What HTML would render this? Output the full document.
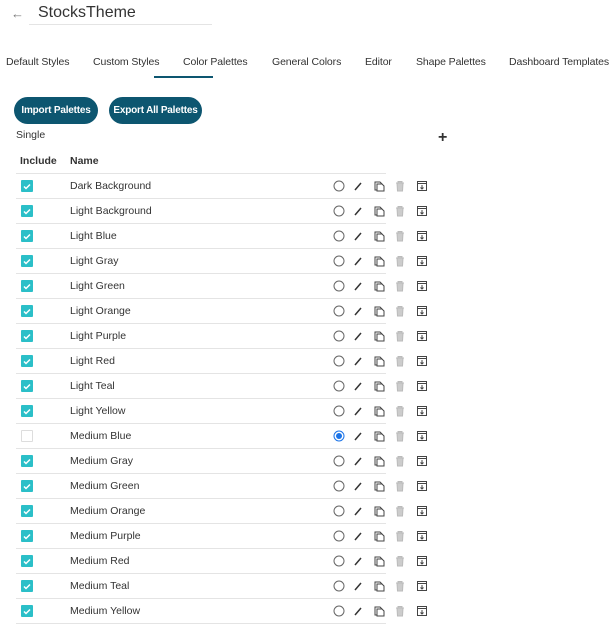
<!DOCTYPE html>
<html><head><style>
body{margin:0;width:615px;height:638px;background:#fff;font-family:"Liberation Sans",sans-serif;color:#333;position:relative;overflow:hidden}
.a{position:absolute;white-space:nowrap}
.tab{position:absolute;top:56px;font-size:10.5px;color:#333;white-space:nowrap;letter-spacing:-0.1px}
.btn{position:absolute;top:97px;height:27px;border-radius:14px;background:#0d5670;color:#fff;font-size:10px;font-weight:bold;line-height:27px;text-align:center;white-space:nowrap;letter-spacing:-0.2px}
.row{position:absolute;left:16px;width:370px;height:25px;border-top:1px solid #e4e4e4;font-size:10.5px}
.cb{position:absolute;left:5px;top:6px;width:12px;height:12px;background:#2bbfc8;border-radius:1px}
.cb.off{background:#fff;border:1px solid #ddd;width:10px;height:10px}
.nm{position:absolute;left:54px;top:6px}
.ic{position:absolute;top:6px}
</style></head><body>
<div class="a" style="left:11px;top:6px;font-size:13px;color:#777">←</div>
<div class="a" style="left:38px;top:4px;font-size:16px;color:#333">StocksTheme</div>
<div class="a" style="left:29px;top:24px;width:183px;height:1px;background:#e4e4e4"></div>
<div class="tab" style="left:6px">Default Styles</div>
<div class="tab" style="left:93px">Custom Styles</div>
<div class="tab" style="left:183px">Color Palettes</div>
<div class="tab" style="left:272px">General Colors</div>
<div class="tab" style="left:365px">Editor</div>
<div class="tab" style="left:416px">Shape Palettes</div>
<div class="tab" style="left:509px">Dashboard Templates</div>
<div class="a" style="left:154px;top:76px;width:59px;height:2px;background:#0d5670"></div>
<div class="btn" style="left:14px;width:84px">Import Palettes</div>
<div class="btn" style="left:109px;width:93px">Export All Palettes</div>
<div class="a" style="left:16px;top:129px;font-size:10.5px">Single</div>
<div class="a" style="left:438px;top:129px;font-size:16px;font-weight:bold">+</div>
<div class="a" style="left:20px;top:155px;font-size:10.5px;font-weight:bold">Include</div>
<div class="a" style="left:70px;top:155px;font-size:10.5px;font-weight:bold">Name</div>
<div id="t"></div>
<div class="a" style="left:16px;top:623px;width:370px;height:1px;background:#e4e4e4"></div>
<script>
var n=["Dark Background","Light Background","Light Blue","Light Gray","Light Green","Light Orange","Light Purple","Light Red","Light Teal","Light Yellow","Medium Blue","Medium Gray","Medium Green","Medium Orange","Medium Purple","Medium Red","Medium Teal","Medium Yellow"];
var h="";
n.forEach(function(s,i){
var sel=s=="Medium Blue";
h+='<div class="row" style="top:'+(173+i*25)+'px">'+
(sel?'<div class="cb off"></div>':'<div class="cb"><svg width="12" height="12"><path d="M3 6.5l2 2 4-4" stroke="#fff" stroke-width="1.5" fill="none"/></svg></div>')+
'<div class="nm">'+s+'</div>'+
'<svg class="ic" style="left:317px" width="12" height="12"><circle cx="6" cy="6" r="5" fill="none" stroke="'+(sel?'#1a73e8':'#666')+'" stroke-width="1"/>'+(sel?'<circle cx="6" cy="6" r="3" fill="#1a73e8"/>':'')+'</svg>'+
'<svg class="ic" style="left:337px" width="10" height="12"><path d="M2 10l6-7" stroke="#333" stroke-width="1.5"/></svg>'+
'<svg class="ic" style="left:357px" width="12" height="12"><path d="M2 2h5l2 2v6H2z" fill="#fff" stroke="#444"/><path d="M4 4h5l2 2v5H4z" fill="#fff" stroke="#444"/></svg>'+
'<svg class="ic" style="left:379px" width="10" height="12"><path d="M1 3h8M3 3V1.5h4V3M2 3l.5 8h5L8 3z" fill="#ccc" stroke="#bbb"/></svg>'+
'<svg class="ic" style="left:400px" width="12" height="12"><rect x="1.5" y="1.5" width="9" height="9" fill="#fff" stroke="#444"/><path d="M1.5 3.5h9M6 5v4M4.5 7.5L6 9l1.5-1.5" stroke="#444" fill="none"/></svg>'+
'</div>';});
document.getElementById("t").innerHTML=h;
</script>
</body></html>
